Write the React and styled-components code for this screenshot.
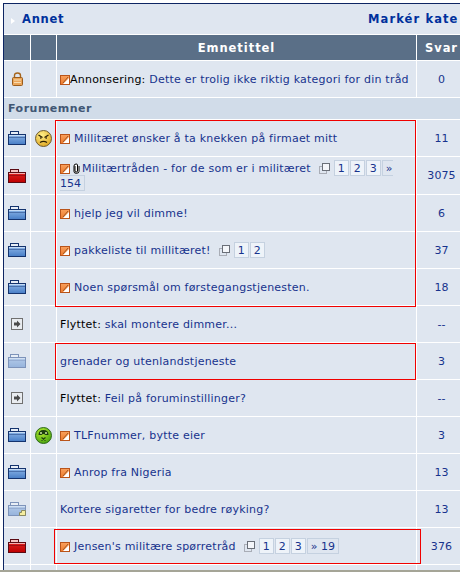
import React from "react";
import styled, { createGlobalStyle } from "styled-components";

const Global = createGlobalStyle`
  html, body { margin: 0; padding: 0; background: #fff; overflow: hidden; }
  body { font-family: "DejaVu Sans", Verdana, sans-serif; }
`;
const Page = styled.div`position: relative; width: 460px; height: 572px; overflow: hidden; background: #fff;`;
const Viewport = styled.div`height: 570px; overflow: hidden; padding: 3px 0 0 3px; box-sizing: border-box;`;
const Strip = styled.div`height: 2px; background: #a5a597;`;
const Board = styled.div`
  width: 466px; display: flex; flex-direction: column; gap: 1px; background: #fff;
  border-top: 1px solid #0d2563; border-left: 1px solid #0d2563;
`;
const TitleRow = styled.div`
  height: 30px; background: #dfe6f0; display: grid; grid-template-columns: 364px 1fr; align-items: center;
  font: bold 11.5px "DejaVu Sans", sans-serif; letter-spacing: .75px; color: #00309c; white-space: nowrap;
`;
const TitleLeft = styled.div`display: flex; align-items: center; gap: 7px; padding-left: 7px;`;
const TitleRight = styled.div`overflow: hidden; letter-spacing: 1.1px; width: 90px;`;
const Arrow = styled.span`
  width: 0; height: 0; border-left: 4px solid #fff; border-top: 3px solid transparent; border-bottom: 3px solid transparent; margin-top: 3px;
`;
const Grid = styled.div`
  display: grid; grid-template-columns: 26px 25px 359px 49px; gap: 1px; height: ${p => p.$h || 36}px;
`;
const Head = styled.div`
  background: #5a6f87; color: #fff; font: bold 11.5px "DejaVu Sans", sans-serif; letter-spacing: .95px;
  display: flex; align-items: center; justify-content: center; white-space: nowrap;
`;
const Section = styled.div`
  height: 21px; background: #d1dce9; color: #405674; font: bold 11px "DejaVu Sans", sans-serif; letter-spacing: .5px;
  display: flex; align-items: center; padding-left: 4px;
`;
const IconCell = styled.div`background: #dfe6f0; display: flex; align-items: center; justify-content: center;`;
const TopicCell = styled.div`
  background: #dfe6f0; padding: 0 3px; display: flex; align-items: center; font-size: 11px; letter-spacing: .22px; color: #000; min-width: 0;
`;
const TopicText = styled.div`line-height: 15px; width: 100%;`;
const Topic = styled.span`color: #17338d;`;
const Count = styled.div`
  background: #dfe6f0; color: #17338d; font-size: 11px; letter-spacing: .1px; display: flex; align-items: center; justify-content: center;
`;
const NoteSvg = styled.svg`display: inline-block; vertical-align: -2px; margin-right: ${p => p.$mr ?? 4}px;`;
const ClipSvg = styled.svg`display: inline-block; vertical-align: -2px; margin-right: 2px;`;
const PagesSvg = styled.svg`display: inline-block; vertical-align: -2px; margin: 0 4px 0 8px;`;
const PageBox = styled.span`
  background: ${p => p.$last ? "#dfe6f0" : "#eef3f9"}; border: 1px solid #c5d1e0; padding: 1px 3px 0; margin-right: 1px;
  color: #17338d; letter-spacing: 0;
`;
const Mark = styled.div`
  position: absolute; box-sizing: border-box; border: 1px solid #f00000; pointer-events: none;
  left: ${p => p.$x}px; top: ${p => p.$y}px; width: ${p => p.$w}px; height: ${p => p.$h}px;
`;

const Note = ({ mr }) => (
  <NoteSvg $mr={mr} width="10" height="10" viewBox="0 0 10 10">
    <defs><linearGradient id="ng" x1="0" y1="0" x2="0" y2="1"><stop offset="0" stopColor="#f9a05c"/><stop offset="1" stopColor="#ee7a2c"/></linearGradient></defs>
    <rect x=".5" y=".5" width="9" height="9" fill="url(#ng)" stroke="#b9541a"/>
    <path d="M9 3 L3 9 H9 Z" fill="#fff"/>
    <path d="M8 2 L3 8" stroke="#8a4a1a" strokeWidth=".8"/>
  </NoteSvg>
);
const Clip = () => (
  <ClipSvg width="7" height="11" viewBox="0 0 7 11">
    <path d="M2 3 V8 Q2 9 3.2 9 Q4.5 9 4.5 8 V2 Q4.5 1 3.2 1 Q1 1 1 3 V8.5 Q1 10.3 3.2 10.3 Q6 10.3 6 8.5 V3" fill="#fff" stroke="#000" strokeWidth="1"/>
  </ClipSvg>
);
const Pages = () => (
  <PagesSvg width="11" height="11" viewBox="0 0 11 11">
    <rect x=".5" y="3.5" width="7" height="7" fill="#dfe6f0" stroke="#a9adb6"/>
    <rect x="3.5" y=".5" width="7" height="7" fill="#f4f6fa" stroke="#6a6f78"/>
  </PagesSvg>
);
const PALETTE = {
  blue: ["#8db6e8", "#477dc6", "#14336e", "#c4daf4", "#e8eef6"],
  red: ["#e02020", "#bd0000", "#5b0a12", "#f4b0b0", "#f3c4c4"],
  faded: ["#b4cbe9", "#96b3dc", "#7d93ba", "#d2e0f2", "#e8eef6"],
};
const Case = ({ kind = "blue", note }) => {
  const [a, b, s, h, t] = PALETTE[kind];
  const id = `c${kind}`;
  return (
    <svg width="18" height="14" viewBox="0 0 18 14">
      <defs><linearGradient id={id} x1="0" y1="0" x2="0" y2="1"><stop offset="0" stopColor={a}/><stop offset="1" stopColor={b}/></linearGradient></defs>
      <rect x="2.5" y=".5" width="8" height="4" fill={t} stroke={s}/>
      <rect x=".5" y="3.5" width="17" height="10" fill={`url(#${id})`} stroke={s}/>
      <path d="M1 4.5 H17" stroke={h}/>
      <path d="M1 6.5 H17" stroke={s} strokeOpacity=".45"/>
      {note && <path d="M11.5 13.5 V10.5 H13.5 V8.5 H17.5 V13.5 Z" fill="#f4eda0" stroke="#8a8a60"/>}
    </svg>
  );
};
const Lock = () => (
  <svg width="11" height="14" viewBox="0 0 11 14">
    <path d="M2.5 6 V3.5 Q2.5 1 5.5 1 Q8.5 1 8.5 3.5 V6" fill="none" stroke="#a6651d" strokeWidth="1.4"/>
    <rect x=".5" y="5.5" width="10" height="8" rx="1" fill="#eaa55a" stroke="#9a5c1c"/>
    <path d="M2 8 H9 M2 10.5 H9" stroke="#f8dcb0"/>
  </svg>
);
const MovedIcon = () => (
  <svg width="12" height="12" viewBox="0 0 12 12">
    <rect x=".5" y=".5" width="11" height="11" fill="#e9ecf0" stroke="#707070"/>
    <path d="M3 4.5 H6 V2.5 L9.5 6 L6 9.5 V7.5 H3 Z" fill="#4a4a4a"/>
  </svg>
);
const Angry = () => (
  <svg width="17" height="17" viewBox="0 0 17 17">
    <defs><radialGradient id="ag" cx=".4" cy=".3" r=".8"><stop offset="0" stopColor="#fff08a"/><stop offset="1" stopColor="#dca018"/></radialGradient></defs>
    <circle cx="8.5" cy="8.5" r="8" fill="url(#ag)" stroke="#6d5c34"/>
    <path d="M3.5 5 L7.5 7.5 M13.5 5 L9.5 7.5" stroke="#2a1d00" strokeWidth="1.3"/>
    <path d="M5.8 7.2 v1.6 M11.2 7.2 v1.6" stroke="#2a1d00" strokeWidth="1.3"/>
    <path d="M5 12.5 Q8.5 10.2 12 12.5" fill="none" stroke="#2a1d00" strokeWidth="1.2"/>
  </svg>
);
const Sick = () => (
  <svg width="17" height="17" viewBox="0 0 17 17">
    <defs><radialGradient id="sg" cx=".4" cy=".3" r=".8"><stop offset="0" stopColor="#b4ec30"/><stop offset="1" stopColor="#3f9a0c"/></radialGradient></defs>
    <circle cx="8.5" cy="8.5" r="8" fill="url(#sg)" stroke="#2e6a1a"/>
    <path d="M3.5 8 Q3.5 3 8.5 3 Q13.5 3 13.5 8 L10.5 8 Q8.5 6 6.5 8 Z" fill="#1d3d10"/>
    <circle cx="6" cy="6" r="1" fill="#cfe8a0"/><circle cx="11" cy="6" r="1" fill="#cfe8a0"/>
    <path d="M6.5 10.5 L10.5 13.5 M10.5 10.5 L6.5 13.5" stroke="#1d3d10" strokeWidth="1.2"/>
  </svg>
);

const Row = ({ icon, smile, h, children, count }) => (
  <Grid $h={h}>
    <IconCell>{icon}</IconCell>
    <IconCell>{smile}</IconCell>
    <TopicCell><TopicText>{children}</TopicText></TopicCell>
    <Count>{count}</Count>
  </Grid>
);

export default function App() {
  return (
    <Page>
      <Global />
      <Viewport>
        <Board>
          <TitleRow>
            <TitleLeft><Arrow />Annet</TitleLeft>
            <TitleRight>Markér kategori som lest</TitleRight>
          </TitleRow>
          <Grid $h={25}>
            <Head /><Head /><Head>Emnetittel</Head><Head>Svar</Head>
          </Grid>
          <Row icon={<Lock />} count="0">
            <Note mr={0} />Annonsering: <Topic>Dette er trolig ikke riktig kategori for din tråd</Topic>
          </Row>
          <Section>Forumemner</Section>
          <Row icon={<Case />} smile={<Angry />} count="11"><Note /><Topic>Millitæret ønsker å ta knekken på firmaet mitt</Topic></Row>
          <Row icon={<Case kind="red" />} h={37} count="3075">
            <Note mr={3} /><Clip /><Topic>Militærtråden - for de som er i militæret</Topic>
            <Pages /><PageBox>1</PageBox><PageBox>2</PageBox><PageBox>3</PageBox><PageBox $last>» 154</PageBox>
          </Row>
          <Row icon={<Case />} count="6"><Note /><Topic>hjelp jeg vil dimme!</Topic></Row>
          <Row icon={<Case />} count="37"><Note /><Topic>pakkeliste til millitæret!</Topic><Pages /><PageBox>1</PageBox><PageBox>2</PageBox></Row>
          <Row icon={<Case />} count="18"><Note /><Topic>Noen spørsmål om førstegangstjenesten.</Topic></Row>
          <Row icon={<MovedIcon />} count="--">Flyttet: <Topic>skal montere dimmer...</Topic></Row>
          <Row icon={<Case kind="faded" />} count="3"><Topic>grenader og utenlandstjeneste</Topic></Row>
          <Row icon={<MovedIcon />} count="--">Flyttet: <Topic>Feil på foruminstillinger?</Topic></Row>
          <Row icon={<Case />} smile={<Sick />} count="3"><Note /><Topic>TLFnummer, bytte eier</Topic></Row>
          <Row icon={<Case />} count="13"><Note /><Topic>Anrop fra Nigeria</Topic></Row>
          <Row icon={<Case kind="faded" note />} count="13"><Topic>Kortere sigaretter for bedre røyking?</Topic></Row>
          <Row icon={<Case kind="red" />} count="376">
            <Note /><Topic>Jensen's militære spørretråd</Topic><Pages /><PageBox>1</PageBox><PageBox>2</PageBox><PageBox>3</PageBox><PageBox $last>» 19</PageBox>
          </Row>
          <Row />
        </Board>
      </Viewport>
      <Strip />
      <Mark $x={55} $y={120} $w={361} $h={187} />
      <Mark $x={55} $y={343} $w={361} $h={37} />
      <Mark $x={54} $y={529} $w={367} $h={35} />
    </Page>
  );
}
